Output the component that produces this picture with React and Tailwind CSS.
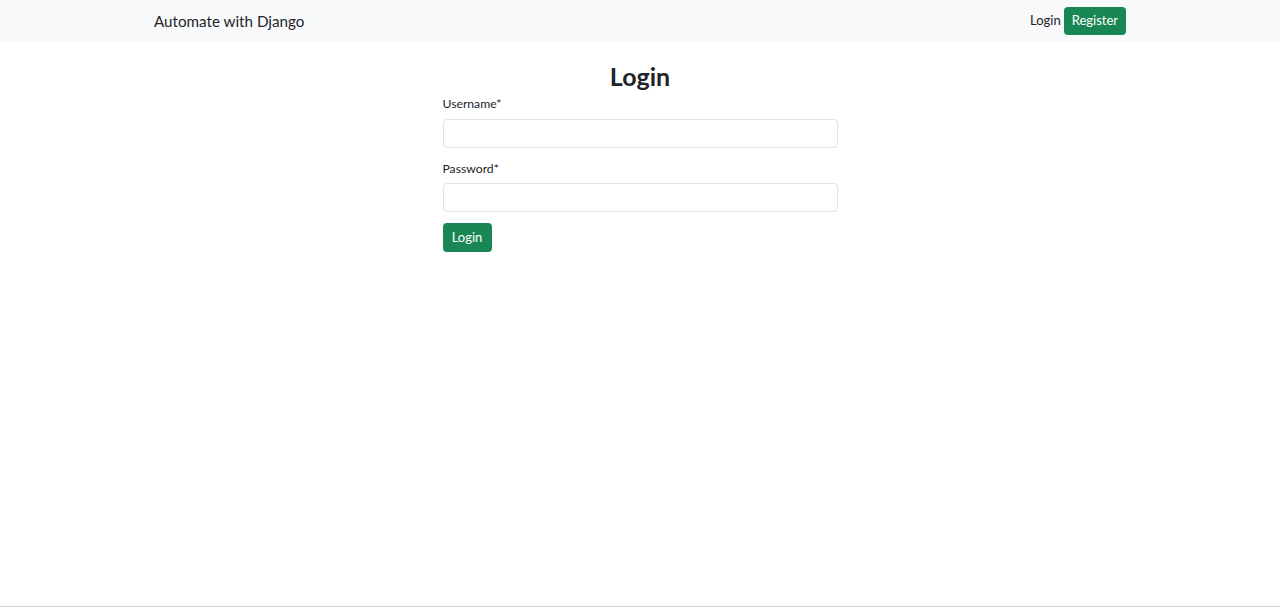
import React, { useState } from 'react';

function App() {
  const [username, setUsername] = useState('');
  const [password, setPassword] = useState('');

  return (
    <div className="flex flex-col h-[608px] bg-white text-[#212529]" style={{ fontFamily: 'Lato, "Noto Sans", sans-serif' }}>
      <nav className="h-[42px] bg-[#f8f9fa] shrink-0">
        <div className="w-[972px] mx-auto h-full flex items-center justify-between">
          <a className="text-[15.2px] text-[#212529]">Automate with Django</a>
          <div className="flex items-center gap-[3px]">
            <a className="text-[13px] text-[#212529]">Login</a>
            <button className="h-[28px] px-[8px] bg-[#198754] text-white text-[13px] rounded-[4px]">Register</button>
          </div>
        </div>
      </nav>

      <main className="flex-1">
        <div className="w-[395px] mx-auto">
          <h2 className="text-center text-[25px] font-bold mt-[18px] leading-[32px]">Login</h2>
          <form onSubmit={(e) => e.preventDefault()}>
            <label className="block text-[12.2px] mt-[4px] leading-[16px]">Username*</label>
            <input
              type="text"
              value={username}
              onChange={(e) => setUsername(e.target.value)}
              className="block w-full h-[29px] mt-[7px] border border-[#dee2e6] rounded-[4px] px-2 text-[13px] focus:outline-none"
            />
            <label className="block text-[12.2px] mt-[13px] leading-[16px]">Password*</label>
            <input
              type="password"
              value={password}
              onChange={(e) => setPassword(e.target.value)}
              className="block w-full h-[29px] mt-[6px] border border-[#dee2e6] rounded-[4px] px-2 text-[13px] focus:outline-none"
            />
            <button className="mt-[11px] h-[29px] w-[49px] bg-[#198754] text-white text-[13px] rounded-[4px]">Login</button>
          </form>
        </div>
      </main>

      <div className="h-[2px] border-t border-[#d4d4d4]" />
    </div>
  );
}

export default App;
